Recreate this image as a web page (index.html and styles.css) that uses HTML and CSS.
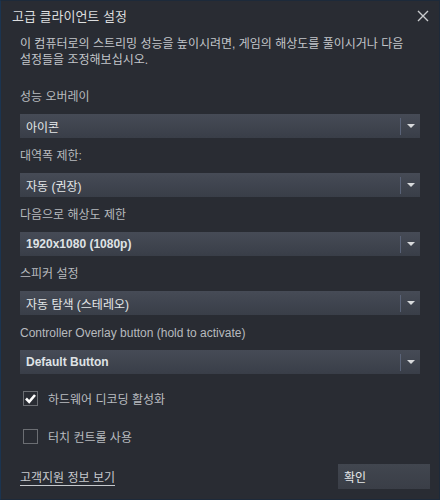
FILE: index.html
```html
<!DOCTYPE html>
<html lang="ko">
<head>
    <meta charset="UTF-8">
    <meta name="viewport" content="width=device-width, initial-scale=1.0">
    <title>고급 클라이언트 설정</title>
    <link rel="stylesheet" href="styles.css">
</head>
<body>
    <div class="dialog">
        <div class="titlebar">
            <span class="title">고급 클라이언트 설정</span>
            <svg class="close" width="12" height="12" viewBox="0 0 12 12">
                <path d="M1 1 L11 11 M11 1 L1 11" stroke="#c9cbce" stroke-width="1.4" fill="none"/>
            </svg>
        </div>

        <div class="content">
            <p class="desc">이 컴퓨터로의 스트리밍 성능을 높이시려면, 게임의 해상도를 풀이시거나 다음 설정들을 조정해보십시오.</p>

            <!-- 설정 항목 -->
            <div class="field">
                <div class="label">성능 오버레이</div>
                <div class="select"><span>아이콘</span><i class="sep"></i><i class="arrow"></i></div>
            </div>
            <div class="field">
                <div class="label">대역폭 제한:</div>
                <div class="select"><span>자동 (권장)</span><i class="sep"></i><i class="arrow"></i></div>
            </div>
            <div class="field">
                <div class="label">다음으로 해상도 제한</div>
                <div class="select bold"><span>1920x1080 (1080p)</span><i class="sep"></i><i class="arrow"></i></div>
            </div>
            <div class="field">
                <div class="label">스피커 설정</div>
                <div class="select"><span>자동 탐색 (스테레오)</span><i class="sep"></i><i class="arrow"></i></div>
            </div>
            <div class="field">
                <div class="label">Controller Overlay button (hold to activate)</div>
                <div class="select bold"><span>Default Button</span><i class="sep"></i><i class="arrow"></i></div>
            </div>

            <!-- 체크박스 -->
            <div class="check">
                <span class="box">
                    <svg width="13" height="13" viewBox="0 0 13 13">
                        <path d="M2 6.5 L5.2 9.8 L11 3" stroke="#ffffff" stroke-width="2.6" fill="none"/>
                    </svg>
                </span>
                <span class="check-text">하드웨어 디코딩 활성화</span>
            </div>
            <div class="check">
                <span class="box"></span>
                <span class="check-text">터치 컨트롤 사용</span>
            </div>

            <div class="footer">
                <a class="link" href="#">고객지원 정보 보기</a>
                <button class="ok">확인</button>
            </div>
        </div>
    </div>
</body>
</html>
```

FILE: styles.css
```css
body {
    margin: 0;
    padding: 0;
    background-color: #20232a;
    font-family: "Liberation Sans", Arial, "Noto Sans CJK KR", sans-serif;
}
.dialog {
    box-sizing: border-box;
    width: 440px;
    height: 500px;
    background-color: #292c33;
    border: 1px solid #1d2a3a;
    border-left-color: #1b3450;
    position: relative;
}
.titlebar {
    height: 29px;
    display: flex;
    align-items: center;
    justify-content: space-between;
    padding: 0 10px 0 11px;
}
.title {
    color: #dcdedf;
    font-size: 13px;
}
.close {
    display: block;
}
.content {
    padding: 0 19px;
}
.desc {
    margin: 6px 0 0 0;
    font-size: 12px;
    line-height: 16px;
    color: #c3c6ca;
    height: 31px;
    word-break: keep-all;
}
.field {
    margin-top: 22px;
}
.field + .field {
    margin-top: 10px;
}
.label {
    font-size: 12px;
    line-height: 16px;
    color: #b7babe;
    margin-bottom: 9px;
}
.select {
    height: 24px;
    display: flex;
    align-items: center;
    background: linear-gradient(to bottom, #464b56, #393e48);
    color: #e4e6e8;
    font-size: 12px;
    padding-left: 6px;
}
.select span {
    flex: 1;
}
.select.bold span {
    font-weight: bold;
    color: #dfe2e5;
}
.sep {
    width: 1px;
    height: 17px;
    background-color: #5a6378;
    margin-right: 6px;
}
.arrow {
    width: 0;
    height: 0;
    border-left: 4px solid transparent;
    border-right: 4px solid transparent;
    border-top: 4px solid #d8dadc;
    margin-right: 5px;
}
.check {
    display: flex;
    align-items: center;
    margin-top: 17px;
    padding-left: 3px;
    height: 15px;
}
.check + .check {
    margin-top: 23px;
}
.box {
    box-sizing: border-box;
    width: 15px;
    height: 15px;
    border: 1px solid #6b6e73;
    display: flex;
    align-items: center;
    justify-content: center;
}
.check-text {
    margin-left: 10px;
    font-size: 12px;
    color: #b9bcc0;
}
.footer {
    display: flex;
    justify-content: space-between;
    align-items: center;
    margin-top: 20px;
    margin-right: -10px;
}
.link {
    color: #c6c9cd;
    font-size: 12px;
    text-decoration: underline;
    text-underline-offset: 3px;
}
.ok {
    width: 92px;
    height: 25px;
    border: none;
    background: linear-gradient(to bottom, #41464f, #3a3e47);
    color: #e6e8ea;
    font-family: "Liberation Sans", Arial, "Noto Sans CJK KR", sans-serif;
    font-size: 12px;
    text-align: left;
    padding-left: 6px;
}
```
